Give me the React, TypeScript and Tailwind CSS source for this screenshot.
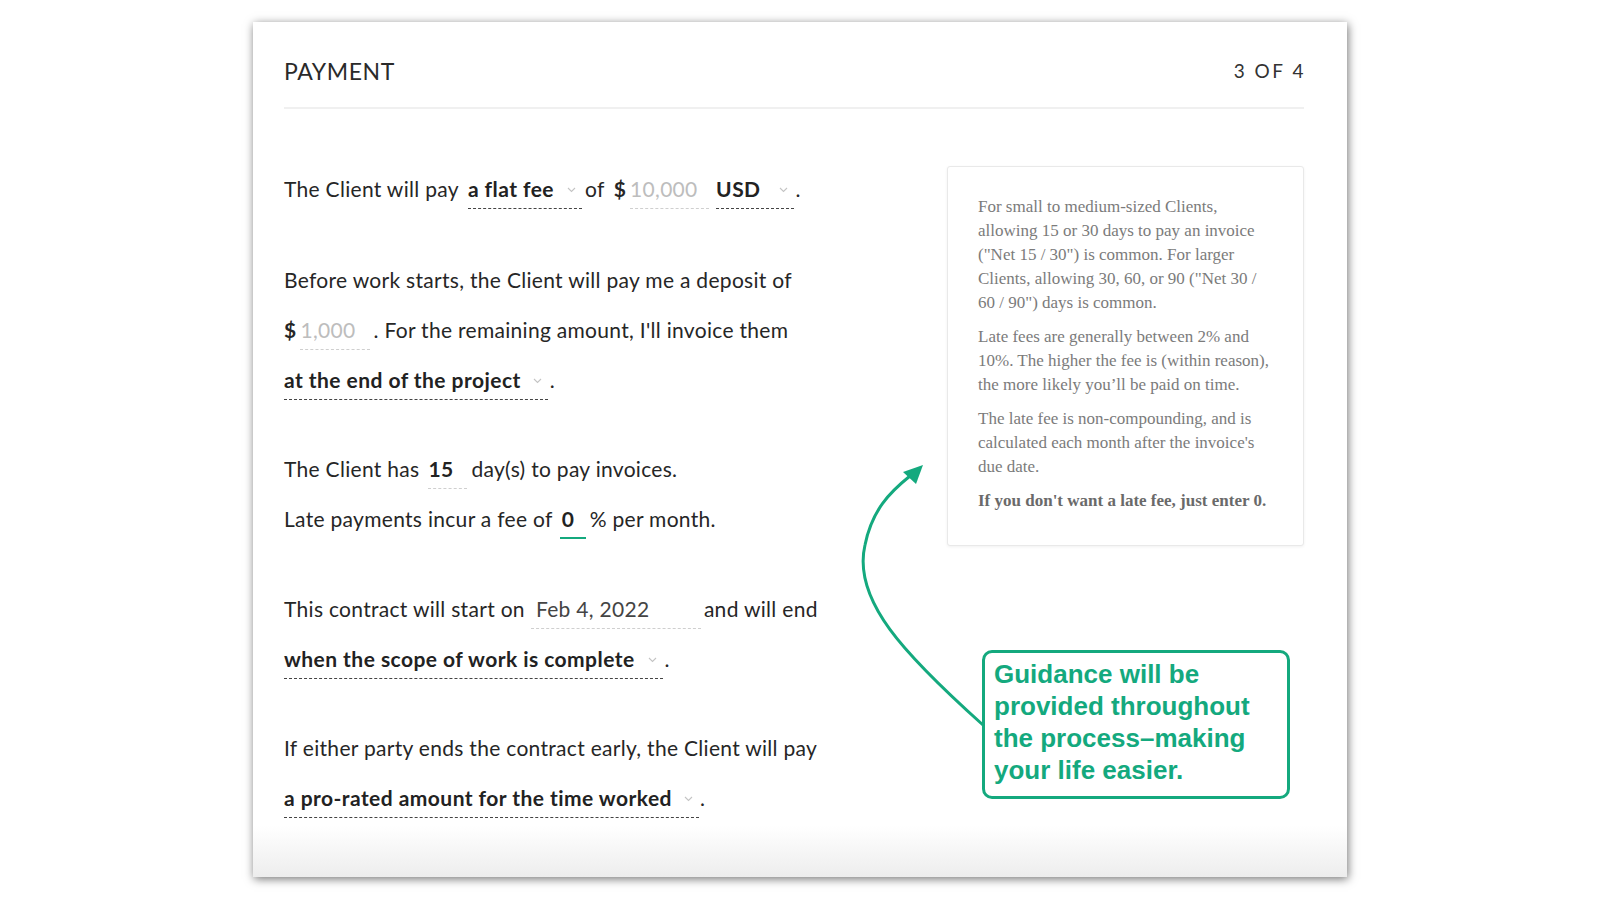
import React from 'react';

const GREEN = '#14a97e';

const Chevron: React.FC<{ ml?: string }> = ({ ml = 'ml-[13px]' }) => (
  <svg width="9" height="6" viewBox="0 0 9 6" className={`inline-block ${ml} mr-[6px] mb-[4px]`}>
    <path d="M1 1l3.5 3.5L8 1" fill="none" stroke="#c4c4c4" strokeWidth="1.1" />
  </svg>
);

// dropdown style field: bold text, chevron, dark dashed underline
const Select: React.FC<{ label: string; className?: string; chevronMl?: string }> = ({ label, className = '', chevronMl }) => (
  <span className={`inline-block font-bold tracking-[0.45px] text-[#222] leading-[28px] pb-[5px] border-b border-dashed border-[#444] ${className}`}>
    {label}
    <Chevron ml={chevronMl} />
  </span>
);

// text input field: fixed width, light dashed underline
const Input: React.FC<{ value: string; className?: string }> = ({ value, className = '' }) => (
  <span className={`inline-block leading-[28px] pb-[5px] border-b border-dashed border-[#cfcfcf] ${className}`}>
    {value}
  </span>
);

const Line: React.FC<{ children: React.ReactNode }> = ({ children }) => (
  <div className="flex items-baseline h-[50px] leading-[50px] whitespace-pre">{children}</div>
);

const App: React.FC = () => {
  return (
    <div className="relative w-[1600px] h-[900px] bg-white overflow-hidden">
      <div
        className="relative mx-auto mt-[22px] w-[1094px] h-[855px] bg-linear-to-b from-white from-94% to-[#ededed] shadow-[1px_2px_9px_rgba(0,0,0,0.55)] pl-[31px] pr-[43px] text-[#262626]"
        style={{ fontFamily: 'Lato, "Open Sans", sans-serif' }}
      >
        {/* Header */}
        <div className="flex items-center justify-between pt-[35px] pb-[22px] border-b-2 border-[#f0f0f0]">
          <h1 className="text-[23px] leading-[28px] tracking-[0.6px] text-[#2a2a2a]">PAYMENT</h1>
          <span className="text-[19px] leading-[28px] tracking-[2.5px] text-[#333] -mr-[2px]">3 OF 4</span>
        </div>

        <div className="flex pt-[55px]">
          {/* Contract terms */}
          <div className="flex-1 text-[21px] tracking-[0.3px]">
            <Line>
              <span>The Client will pay</span>
              <Select label="a flat fee" className="ml-[9px]" />
              <span className="ml-[3px]">of</span>
              <span className="ml-[9px] font-bold">$</span>
              <Input value="10,000" className="ml-[4px] w-[79px] text-[#bdbdbd]" />
              <Select label="USD" className="ml-[7px]" chevronMl="ml-[18px]" />
              <span className="ml-[2px]">.</span>
            </Line>

            <div className="mt-[41px]">
              <Line>
                <span>Before work starts, the Client will pay me a deposit of</span>
              </Line>
              <Line>
                <span className="font-bold">$</span>
                <Input value="1,000" className="ml-[4px] w-[70px] text-[#bdbdbd]" />
                <span className="ml-[3px]">. For the remaining amount, I'll invoice them</span>
              </Line>
              <Line>
                <Select label="at the end of the project" chevronMl="ml-[12px]" />
                <span className="ml-[2px]">.</span>
              </Line>
            </div>

            <div className="mt-[39px]">
              <Line>
                <span>The Client has</span>
                <Input value="15" className="ml-[9px] w-[39px] font-bold text-[#222]" />
                <span className="ml-[4px]">day(s) to pay invoices.</span>
              </Line>
              <Line>
                <span>Late payments incur a fee of</span>
                <span
                  className="inline-block ml-[7px] w-[26px] pl-[2px] leading-[28px] pb-[4px] font-bold text-[#222] border-b-2"
                  style={{ borderColor: GREEN }}
                >
                  0
                </span>
                <span className="ml-[4px]">% per month.</span>
              </Line>
            </div>

            <div className="mt-[40px]">
              <Line>
                <span>This contract will start on</span>
                <Input value="Feb 4, 2022" className="ml-[6px] w-[170px] pl-[5px] text-[#444]" />
                <span className="ml-[3px]">and will end</span>
              </Line>
              <Line>
                <Select label="when the scope of work is complete" />
                <span className="ml-[2px]">.</span>
              </Line>
            </div>

            <div className="mt-[39px]">
              <Line>
                <span>If either party ends the contract early, the Client will pay</span>
              </Line>
              <Line>
                <Select label="a pro-rated amount for the time worked" chevronMl="ml-[12px]" />
                <span className="ml-[1px]">.</span>
              </Line>
            </div>
          </div>

          {/* Guidance column */}
          <div className="w-[357px] pt-[2px]">
            <div
              className="border border-[#e9e9e9] rounded-[3px] bg-white shadow-[0_1px_3px_rgba(0,0,0,0.06)] pl-[30px] pr-[32px] pt-[28px] pb-[32px] text-[17px] leading-[24px] text-[#7b7b7b]"
              style={{ fontFamily: '"Liberation Serif", "DejaVu Serif", serif' }}
            >
              <p>
                For small to medium-sized Clients, allowing 15 or 30 days to pay an invoice ("Net 15 / 30") is
                common. For larger Clients, allowing 30, 60, or 90 ("Net 30 / 60 / 90") days is common.
              </p>
              <p className="mt-[10px]">
                Late fees are generally between 2% and 10%. The higher the fee is (within reason), the more likely
                you’ll be paid on time.
              </p>
              <p className="mt-[10px]">
                The late fee is non-compounding, and is calculated each month after the invoice's due date.
              </p>
              <p className="mt-[10px] font-bold text-[#6a6a6a]">If you don't want a late fee, just enter 0.</p>
            </div>

            <div
              className="ml-[35px] mt-[104px] w-[308px] rounded-[10px] border-[3px] pl-[9px] pt-[5px] pb-[10px] text-[26px] leading-[32px] font-bold"
              style={{ borderColor: GREEN, color: GREEN, fontFamily: '"Liberation Sans", Arial, sans-serif' }}
            >
              Guidance will be
              <br />
              provided throughout
              <br />
              the process–making
              <br />
              your life easier.
            </div>
          </div>
        </div>

        {/* annotation arrow */}
        <svg className="absolute left-0 top-0 pointer-events-none" width="1094" height="855" viewBox="0 0 1094 855">
          <path
            d="M730 703 C652 633 599 578 612 523 C619 488 637 470 657 454"
            fill="none"
            stroke={GREEN}
            strokeWidth="3"
            strokeLinecap="round"
          />
          <path d="M670 443 L650 450 L663 462 Z" fill={GREEN} />
        </svg>
      </div>
    </div>
  );
};

export default App;
